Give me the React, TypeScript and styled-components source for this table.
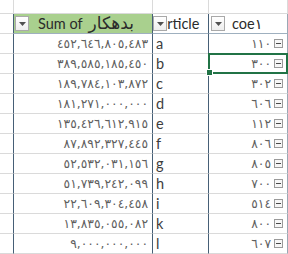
import React from 'react';
import styled, { createGlobalStyle } from 'styled-components';

const Global = createGlobalStyle`
  html, body { margin: 0; padding: 0; background: #ffffff; }
  body { font-family: Lato, "DejaVu Sans", sans-serif; }
`;

const COLS = '14px 139px 56px 79px';
const DARK = '#465f76';
const LIGHT = '#dadada';
const GREEN = '#217346';

const Sheet = styled.div`
  width: 288px;
  height: 254px;
  overflow: hidden;
  display: flex;
  flex-direction: column;
  background: #fff;
`;

const Row = styled.div<{ $h: number }>`
  display: grid;
  grid-template-columns: ${COLS};
  height: ${(p) => p.$h}px;
  flex: none;
`;

const Cell = styled.div<{ $right?: string; $bottom?: string }>`
  box-sizing: border-box;
  min-width: 0;
  display: flex;
  align-items: center;
  white-space: nowrap;
  overflow: hidden;
  border-right: 1px solid ${(p) => p.$right ?? LIGHT};
  border-bottom: 1px solid ${(p) => p.$bottom ?? LIGHT};
`;

const SumHeader = styled(Cell)`
  background: #a9d08e;
  padding: 0 5px 0 1px;
`;

const HeaderLabel = styled.span<{ $gap: number }>`
  display: flex;
  align-items: center;
  margin-left: ${(p) => p.$gap}px;
  font-size: 14.5px;
  color: #2b2b2b;
`;

const Persian = styled.span`
  margin-left: 6px;
  font-family: "DejaVu Sans", sans-serif;
  font-size: 17px;
  line-height: 1;
  margin-top: -1px;
`;

const ArticleHeader = styled(Cell)`
  position: relative;
  padding-left: 7px;
`;

const CodeHeader = styled(Cell)`
  padding-left: 2px;
`;

const DropButton = styled.span<{ $overlay?: boolean }>`
  box-sizing: border-box;
  flex: none;
  width: 14px;
  height: 15px;
  border: 1px solid #a9a9a9;
  background: linear-gradient(#ffffff, #eeeeee);
  display: flex;
  align-items: center;
  justify-content: center;
  ${(p) => (p.$overlay ? 'position: absolute; left: 0; top: 2px;' : '')}
`;

const AmountCell = styled(Cell)`
  justify-content: flex-end;
  padding-right: 4px;
  font-family: "DejaVu Sans", sans-serif;
  font-size: 12.3px;
  letter-spacing: 1.3px;
  color: #5f5f5f;
`;

const ArticleCell = styled(Cell)`
  padding-left: 3px;
  font-size: 14.5px;
  color: #3d3d3d;
`;

const CodeCell = styled(Cell)<{ $selected?: boolean }>`
  justify-content: flex-end;
  gap: 3px;
  padding-right: 4px;
  font-family: "DejaVu Sans", sans-serif;
  font-size: 12.3px;
  letter-spacing: 1.4px;
  color: #5f5f5f;
  ${(p) => (p.$selected ? 'position: relative; overflow: visible;' : '')}
`;

const Selection = styled.span`
  position: absolute;
  left: -1px;
  top: -1px;
  right: -1px;
  bottom: -1px;
  border: 2px solid ${GREEN};
  z-index: 2;
  pointer-events: none;
`;

const FillHandle = styled.span`
  position: absolute;
  left: -4px;
  bottom: -4px;
  width: 5px;
  height: 5px;
  background: ${GREEN};
  border: 1px solid #fff;
`;

const Arrow = () => (
  <svg width="7" height="4" viewBox="0 0 7 4">
    <path d="M0 0 H7 L3.5 4 Z" fill="#505050" />
  </svg>
);

const Collapse = () => (
  <svg width="9" height="9" viewBox="0 0 9 9" style={{ flex: 'none' }}>
    <rect x="0.5" y="0.5" width="8" height="8" fill="#f6f6f6" stroke="#9a9a9a" />
    <path d="M2 4.5 H7" stroke="#4a4a4a" strokeWidth="1" />
  </svg>
);

const rows: [string, string, string][] = [
  ['٤٥٢,٦٤٦,٨٠٥,٤٨٣', 'a', '١١٠'],
  ['٣٨٩,٥٨٥,١٨٥,٤٥٠', 'b', '٣٠٠'],
  ['١٨٩,٧٨٤,١٠٣,٨٧٢', 'c', '٣٠٢'],
  ['١٨١,٢٧١,٠٠٠,٠٠٠', 'd', '٦٠٦'],
  ['١٣٥,٤٢٦,٦١٢,٩١٥', 'e', '١١٢'],
  ['٨٧,٨٩٢,٣٢٧,٤٤٥', 'f', '٨٠٦'],
  ['٥٢,٥٣٢,٠٣١,١٥٦', 'g', '٨٠٥'],
  ['٥١,٧٣٩,٢٤٢,٠٩٩', 'h', '٧٠٠'],
  ['٢٢,٦٠٩,٣٠٤,٤٥٨', 'i', '٥١٤'],
  ['١٣,٨٣٥,٠٥٥,٠٨٢', 'k', '٨٠٠'],
  ['٩,٠٠٠,٠٠٠,٠٠٠', 'l', '٦٠٧'],
];

export default function App() {
  return (
    <>
      <Global />
      <Sheet>
        <Row $h={14}>
          <Cell />
          <Cell />
          <Cell />
          <Cell />
        </Row>
        <Row $h={20}>
          <Cell $right={DARK} />
          <SumHeader $right={DARK} $bottom="#9fb0bf">
            <DropButton>
              <Arrow />
            </DropButton>
            <HeaderLabel $gap={9}>
              <span>Sum of</span>
              <Persian>بدهکار</Persian>
            </HeaderLabel>
          </SumHeader>
          <ArticleHeader $right={DARK} $bottom="#9fb0bf">
            <DropButton $overlay>
              <Arrow />
            </DropButton>
            <HeaderLabel $gap={0}>article</HeaderLabel>
          </ArticleHeader>
          <CodeHeader $right="#9aa8b5" $bottom="#9fb0bf">
            <DropButton>
              <Arrow />
            </DropButton>
            <HeaderLabel $gap={7}>coe١</HeaderLabel>
          </CodeHeader>
        </Row>
        {rows.map(([amount, article, code], i) => (
          <Row $h={20} key={article}>
            <Cell $right={DARK} />
            <AmountCell $right={DARK}>{amount}</AmountCell>
            <ArticleCell $right={DARK}>{article}</ArticleCell>
            <CodeCell $right="#9aa8b5" $selected={i === 1}>
              <span>{code}</span>
              <Collapse />
              {i === 1 && (
                <Selection>
                  <FillHandle />
                </Selection>
              )}
            </CodeCell>
          </Row>
        ))}
      </Sheet>
    </>
  );
}
